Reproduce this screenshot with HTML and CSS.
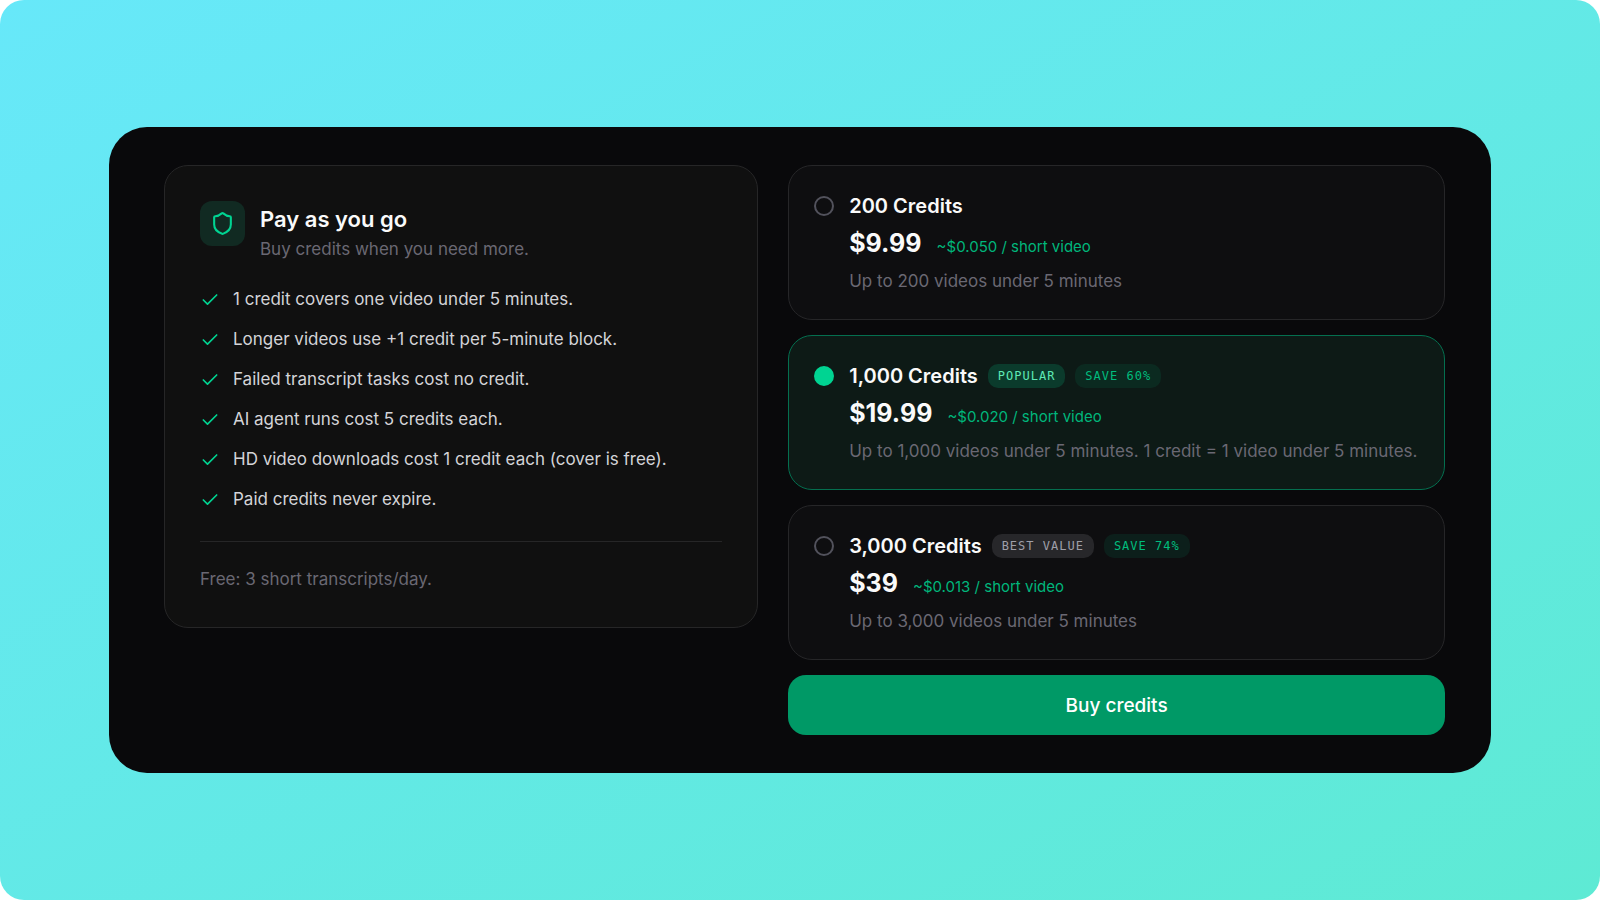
FILE: index.html
```html
<!DOCTYPE html>
<html lang="en">

<head>
    <meta charset="UTF-8">
    <meta name="viewport" content="width=device-width, initial-scale=1.0">
    <title>Buy credits</title>
    <link rel="stylesheet" href="styles.css">
</head>

<body>
    <main class="panel">
        <section class="info">
            <div class="info-header">
                <span class="info-icon">
                    <svg viewBox="0 0 24 24" width="25" height="25" aria-hidden="true">
                        <path d="M20 13c0 5-3.5 7.5-7.66 8.95a1 1 0 0 1-.67-.01C7.5 20.5 4 18 4 13V6a1 1 0 0 1 1-1c2 0 4.5-1.2 6.24-2.72a1.17 1.17 0 0 1 1.52 0C14.51 3.81 17 5 19 5a1 1 0 0 1 1 1z" />
                    </svg>
                </span>
                <div>
                    <h1>Pay as you go</h1>
                    <p class="muted">Buy credits when you need more.</p>
                </div>
            </div>

            <ul class="features">
                <li><svg viewBox="0 0 24 24" width="20" height="20" aria-hidden="true"><path d="M20 6 9 17l-5-5" /></svg>1 credit covers one video under 5 minutes.</li>
                <li><svg viewBox="0 0 24 24" width="20" height="20" aria-hidden="true"><path d="M20 6 9 17l-5-5" /></svg>Longer videos use +1 credit per 5-minute block.</li>
                <li><svg viewBox="0 0 24 24" width="20" height="20" aria-hidden="true"><path d="M20 6 9 17l-5-5" /></svg>Failed transcript tasks cost no credit.</li>
                <li><svg viewBox="0 0 24 24" width="20" height="20" aria-hidden="true"><path d="M20 6 9 17l-5-5" /></svg>AI agent runs cost 5 credits each.</li>
                <li><svg viewBox="0 0 24 24" width="20" height="20" aria-hidden="true"><path d="M20 6 9 17l-5-5" /></svg>HD video downloads cost 1 credit each (cover is free).</li>
                <li><svg viewBox="0 0 24 24" width="20" height="20" aria-hidden="true"><path d="M20 6 9 17l-5-5" /></svg>Paid credits never expire.</li>
            </ul>

            <p class="free-note muted">Free: 3 short transcripts/day.</p>
        </section>

        <form class="plans">
            <label class="plan" for="plan-200">
                <input type="radio" id="plan-200" name="plan" value="200">
                <span class="plan-body">
                    <span class="plan-title">200 Credits</span>
                    <span class="plan-price"><strong>$9.99</strong> <small>~$0.050 / short video</small></span>
                    <span class="plan-desc muted">Up to 200 videos under 5 minutes</span>
                </span>
            </label>

            <label class="plan" for="plan-1000">
                <input type="radio" id="plan-1000" name="plan" value="1000" checked>
                <span class="plan-body">
                    <span class="plan-title">1,000 Credits
                        <span class="badge badge-popular">POPULAR</span>
                        <span class="badge badge-save">SAVE 60%</span>
                    </span>
                    <span class="plan-price"><strong>$19.99</strong> <small>~$0.020 / short video</small></span>
                    <span class="plan-desc muted">Up to 1,000 videos under 5 minutes. 1 credit = 1 video under 5 minutes.</span>
                </span>
            </label>

            <label class="plan" for="plan-3000">
                <input type="radio" id="plan-3000" name="plan" value="3000">
                <span class="plan-body">
                    <span class="plan-title">3,000 Credits
                        <span class="badge badge-value">BEST VALUE</span>
                        <span class="badge badge-save">SAVE 74%</span>
                    </span>
                    <span class="plan-price"><strong>$39</strong> <small>~$0.013 / short video</small></span>
                    <span class="plan-desc muted">Up to 3,000 videos under 5 minutes</span>
                </span>
            </label>

            <button type="button" class="buy">Buy credits</button>
        </form>
    </main>
</body>

</html>
```
FILE: styles.css
```css
* {
    box-sizing: border-box;
}

html {
    background: #fff;
}

body {
    margin: 0;
    min-height: 100vh;
    padding: 40px 109px;
    display: flex;
    align-items: center;
    justify-content: center;
    background: linear-gradient(to bottom right, #67e8f9, #5eead4);
    border-radius: 24px;
    font-family: Inter, "Liberation Sans", sans-serif;
    font-size: 17px;
    line-height: 25px;
    color: #fafafa;
}

h1,
p,
ul {
    margin: 0;
    padding: 0;
}

.muted {
    color: #6a6873;
}

.panel {
    flex: 1;
    display: grid;
    grid-template-columns: 19fr 21fr;
    align-items: start;
    gap: 30px;
    padding: 38px 46px 38px 55px;
    background: #09090b;
    border-radius: 38px;
}

/* left card */
.info {
    padding: 35px;
    background: #101010;
    border: 1px solid #262627;
    border-radius: 24px;
}

.info-header {
    display: flex;
    gap: 15px;
}

.info-icon {
    flex: none;
    width: 45px;
    height: 45px;
    display: flex;
    align-items: center;
    justify-content: center;
    background: #112a22;
    border-radius: 12px;
}

svg {
    flex: none;
    fill: none;
    stroke: #00d492;
    stroke-width: 2;
    stroke-linecap: round;
    stroke-linejoin: round;
}

h1 {
    font-size: 22px;
    font-weight: 600;
    line-height: 36px;
}

.features {
    display: grid;
    gap: 15px;
    margin: 25px 0 29px;
    list-style: none;
    color: #d4d4d8;
}

.features li {
    display: flex;
    align-items: center;
    gap: 13px;
}

.free-note {
    padding-top: 25px;
    border-top: 1px solid #262627;
}

/* credit packs */
.plans {
    display: grid;
    gap: 15px;
}

.plan {
    display: flex;
    gap: 15px;
    padding: 25px;
    background: #0e0e10;
    border: 1px solid #262628;
    border-radius: 24px;
    cursor: pointer;
}

.plan:has(input:checked) {
    background: #0d1a16;
    border-color: #046f4f;
}

.plan input {
    appearance: none;
    flex: none;
    width: 20px;
    height: 20px;
    margin: 5px 0;
    border: 2px solid #52525c;
    border-radius: 50%;
}

.plan input:checked {
    background: #00d492;
    border-color: #00d492;
}

.plan-body {
    display: grid;
}

.plan-title {
    display: flex;
    align-items: center;
    gap: 10px;
    font-size: 20px;
    font-weight: 600;
    line-height: 30px;
}

.plan-price {
    display: flex;
    align-items: baseline;
    gap: 15px;
    margin: 5px 0 8px;
}

.plan-price strong {
    font-size: 25px;
    font-weight: 700;
    line-height: 35px;
}

.plan-price small {
    font-size: 15px;
    line-height: 25px;
    color: #00b67b;
}

.badge {
    padding: 0 10px;
    border-radius: 10px;
    font-family: "DejaVu Sans Mono", monospace;
    font-size: 12px;
    font-weight: 400;
    line-height: 24px;
    letter-spacing: 1px;
}

.badge-popular {
    background: #0b3b2c;
    color: #5ee9b5;
}

.badge-save {
    background: rgba(0, 188, 125, 0.1);
    color: #00bc7d;
}

.badge-value {
    background: #27272a;
    color: #9f9fa9;
}

.buy {
    height: 60px;
    border: 0;
    border-radius: 18px;
    background: #009966;
    color: #fff;
    font: inherit;
    font-size: 19px;
    font-weight: 500;
    cursor: pointer;
}
```
